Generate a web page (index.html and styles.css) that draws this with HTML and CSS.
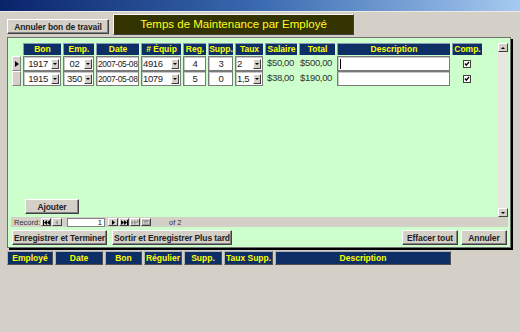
FILE: index.html
```html
<!doctype html>
<html lang="fr">
    <head>
        <meta charset="utf-8">
        <title>Temps de Maintenance par Employé</title>
        <link rel="stylesheet" href="styles.css">
    </head>
    <body>
        <div class="titlebar"></div>

        <div class="top">
            <button class="btn btn-cancel-work">Annuler bon de travail</button>
            <div class="title">Temps de Maintenance par Employé</div>
        </div>

        <div class="frame">
            <div class="sub">
                <div class="sub-body">
                    <div class="grid">
                        <div class="row head">
                            <div class="blank"></div>
                            <div class="hdr">Bon</div>
                            <div class="hdr">Emp.</div>
                            <div class="hdr">Date</div>
                            <div class="hdr"># Équip</div>
                            <div class="hdr">Reg.</div>
                            <div class="hdr">Supp.</div>
                            <div class="hdr">Taux</div>
                            <div class="hdr">Salaire</div>
                            <div class="hdr">Total</div>
                            <div class="hdr">Description</div>
                            <div class="hdr">Comp.</div>
                        </div>

                        <div class="row data">
                            <div class="selector current"><span class="arrow"></span></div>
                            <div class="box combo"><span class="val center">1917</span><span class="drop"></span></div>
                            <div class="box combo"><span class="val center">02</span><span class="drop"></span></div>
                            <div class="box date"><span class="val">2007-05-08</span></div>
                            <div class="box combo"><span class="val">4916</span><span class="drop"></span></div>
                            <div class="box"><span class="val center">4</span></div>
                            <div class="box"><span class="val center">3</span></div>
                            <div class="box combo"><span class="val">2</span><span class="drop"></span></div>
                            <div class="money">$50,00</div>
                            <div class="money">$500,00</div>
                            <div class="box desc"><span class="caret"></span></div>
                            <div class="check"><svg width="8" height="8" viewBox="0 0 8 8"><rect x="0.5" y="0.5" width="7" height="7" fill="#fff" stroke="#404040"/><path d="M2 3.5 L3.3 5.2 L6 2" fill="none" stroke="#000" stroke-width="1.3"/></svg></div>
                        </div>

                        <div class="row data">
                            <div class="selector"></div>
                            <div class="box combo"><span class="val center">1915</span><span class="drop"></span></div>
                            <div class="box combo"><span class="val center">350</span><span class="drop"></span></div>
                            <div class="box date"><span class="val">2007-05-08</span></div>
                            <div class="box combo"><span class="val">1079</span><span class="drop"></span></div>
                            <div class="box"><span class="val center">5</span></div>
                            <div class="box"><span class="val center">0</span></div>
                            <div class="box combo"><span class="val">1,5</span><span class="drop"></span></div>
                            <div class="money">$38,00</div>
                            <div class="money">$190,00</div>
                            <div class="box desc"></div>
                            <div class="check"><svg width="8" height="8" viewBox="0 0 8 8"><rect x="0.5" y="0.5" width="7" height="7" fill="#fff" stroke="#404040"/><path d="M2 3.5 L3.3 5.2 L6 2" fill="none" stroke="#000" stroke-width="1.3"/></svg></div>
                        </div>

                        <button class="btn btn-add">Ajouter</button>
                    </div>

                    <div class="vscroll">
                        <div class="sbtn"><span class="up"></span></div>
                        <div class="track"></div>
                        <div class="sbtn"><span class="down"></span></div>
                    </div>
                </div>

                <div class="nav">
                    <span class="nav-label">Record:</span>
                    <span class="nbtn"><svg width="7" height="5" viewBox="0 0 7 5"><rect x="0" y="0" width="1" height="5"/><path d="M1 2.5 L4 0 V5 Z M4 2.5 L7 0 V5 Z"/></svg></span>
                    <span class="nbtn dim"><svg width="4" height="5" viewBox="0 0 4 5"><path d="M0 2.5 L3 0 V5 Z"/></svg></span>
                    <span class="recno">1</span>
                    <span class="nbtn"><svg width="4" height="5" viewBox="0 0 4 5"><path d="M1 0 L4 2.5 L1 5 Z"/></svg></span>
                    <span class="nbtn"><svg width="7" height="5" viewBox="0 0 7 5"><path d="M0 0 L3 2.5 L0 5 Z M3 0 L6 2.5 L3 5 Z"/><rect x="6" y="0" width="1" height="5"/></svg></span>
                    <span class="nbtn dim"><svg width="8" height="5" viewBox="0 0 8 5"><path d="M0 0 L3 2.5 L0 5 Z M3 0 L6 2.5 L3 5 Z"/><path d="M6.5 0 V3 M5.5 1.5 H7.5" stroke="#9a9a9a" stroke-width="1"/></svg></span>
                    <span class="nbtn dim"><svg width="8" height="5" viewBox="0 0 8 5"><rect x="0.5" y="0.5" width="7" height="4" fill="none" stroke="#9a9a9a"/><path d="M2 1.5 H6 M2 3 H6" stroke="#9a9a9a"/></svg></span>
                    <span class="nav-of">of 2</span>
                </div>
            </div>

            <div class="actions">
                <button class="btn btn-save">Enregistrer et Terminer</button>
                <button class="btn btn-later">Sortir et Enregistrer Plus tard</button>
                <button class="btn btn-clear">Effacer tout</button>
                <button class="btn btn-annul">Annuler</button>
            </div>
        </div>

        <div class="legend">
            <div class="lg w-emp">Employé</div>
            <div class="lg w-date">Date</div>
            <div class="lg w-bon">Bon</div>
            <div class="lg w-reg">Régulier</div>
            <div class="lg w-supp">Supp.</div>
            <div class="lg w-taux">Taux Supp.</div>
            <div class="lg w-desc">Description</div>
        </div>
    </body>
</html>
```

FILE: styles.css
```css
body {
    margin: 0;
    width: 520px;
    height: 332px;
    overflow: hidden;
    background: #d4d0c8;
    font-family: "Liberation Sans", Arial, sans-serif;
    color: #111;
}

.titlebar {
    height: 11px;
    background: linear-gradient(to right, #0a246a, #3a6ab0 50%, #a6caf0);
    border-bottom: 1px solid #ecebe6;
}

/* buttons, windows classic look */
.btn {
    box-sizing: border-box;
    height: 15px;
    padding: 0;
    background: #d4d0c8;
    border: 1px solid;
    border-color: #ffffff #404040 #404040 #ffffff;
    box-shadow: inset -1px -1px 0 #808080;
    font-family: "Liberation Sans", Arial, sans-serif;
    font-weight: bold;
    font-size: 8.5px;
    letter-spacing: -0.1px;
    color: #222;
    text-align: center;
}

.top {
    display: flex;
    align-items: flex-start;
    padding: 2px 0 0 7px;
}
.btn-cancel-work {
    width: 102px;
    margin-top: 5px;
}
.title {
    box-sizing: border-box;
    width: 241px;
    height: 21px;
    margin-left: 4px;
    background: #333300;
    border: 1px solid;
    border-color: #f4f4f0 #404040 #404040 #f4f4f0;
    color: #ffff1a;
    font-size: 11.5px;
    line-height: 18px;
    text-align: center;
}

.frame {
    box-sizing: border-box;
    width: 504px;
    margin: 2px 0 0 7px;
    padding: 3px 2px 2px 3px;
    background: #ccffcc;
    border: 1px solid #707070;
    box-shadow: 2px 2px 0 #000;
}

.sub-body {
    display: flex;
    height: 176px;
}
.grid {
    flex: 1;
    display: flex;
    flex-direction: column;
    padding: 2px 0 3px 1px;
}
.row {
    display: grid;
    grid-template-columns: 9px 38px 31px 43px 40px 23px 25px 28px 32px 36px 113px 30px;
    column-gap: 2px;
}
.head {
    height: 12px;
}
.data {
    height: 14px;
    margin-top: 1px;
}

.hdr {
    background: #0d2f66;
    border-top: 1px solid #8a9ab8;
    border-left: 1px solid #8a9ab8;
    color: #ffff00;
    font-weight: bold;
    font-size: 8.5px;
    line-height: 11px;
    text-align: center;
    white-space: nowrap;
}

.selector {
    box-sizing: border-box;
    background: #d4d0c8;
    border: 1px solid;
    border-color: #ffffff #808080 #808080 #ffffff;
    display: flex;
    align-items: center;
    justify-content: center;
    height: 15px;
}
.arrow {
    width: 0;
    height: 0;
    border-top: 3px solid transparent;
    border-bottom: 3px solid transparent;
    border-left: 4px solid #000;
}

.box {
    box-sizing: border-box;
    display: flex;
    align-items: center;
    background: #fff;
    border: 1px solid #7a7a7a;
    box-shadow: inset 1px 1px 0 #c8c8c8;
    font-size: 9.5px;
    letter-spacing: -0.35px;
    color: #222;
    white-space: nowrap;
    overflow: hidden;
}
.box.date {
    font-size: 8.5px;
    letter-spacing: -0.4px;
}
.val {
    flex: 1;
    padding-left: 1px;
}
.val.center {
    text-align: center;
}
.drop {
    box-sizing: border-box;
    width: 8px;
    height: 10px;
    margin-right: 1px;
    background: #d4d0c8;
    border: 1px solid;
    border-color: #ffffff #404040 #404040 #ffffff;
    display: flex;
    align-items: center;
    justify-content: center;
}
.drop::after {
    content: "";
    border-left: 2px solid transparent;
    border-right: 2px solid transparent;
    border-top: 2px solid #000;
}
.desc {
    padding-left: 2px;
}
.caret {
    width: 1px;
    height: 10px;
    background: #000;
}

.money {
    font-size: 9.5px;
    letter-spacing: -0.35px;
    color: #333;
    text-align: right;
    line-height: 14px;
    padding-right: 3px;
}
.check {
    display: flex;
    align-items: center;
    justify-content: center;
}

.btn-add {
    width: 54px;
    margin: auto 0 0 13px;
}

.vscroll {
    width: 10px;
    margin-top: 2px;
    display: flex;
    flex-direction: column;
    background: #e8e6e1;
}
.sbtn {
    box-sizing: border-box;
    height: 9px;
    background: #d4d0c8;
    border: 1px solid;
    border-color: #ffffff #404040 #404040 #ffffff;
    display: flex;
    align-items: center;
    justify-content: center;
}
.track {
    flex: 1;
}
.up {
    border-left: 2px solid transparent;
    border-right: 2px solid transparent;
    border-bottom: 2px solid #000;
}
.down {
    border-left: 2px solid transparent;
    border-right: 2px solid transparent;
    border-top: 2px solid #000;
}

.nav {
    height: 10px;
    display: flex;
    align-items: center;
    background: #d4d0c8;
    font-size: 7.5px;
    color: #333;
    padding-left: 3px;
}
.nav-label {
    width: 27px;
}
.nbtn {
    box-sizing: border-box;
    width: 10px;
    height: 8px;
    margin-right: 1px;
    background: #d4d0c8;
    border: 1px solid;
    border-color: #ffffff #404040 #404040 #ffffff;
    display: flex;
    align-items: center;
    justify-content: center;
}
.nbtn.dim svg {
    fill: #9a9a9a;
}
.recno {
    box-sizing: border-box;
    width: 38px;
    height: 9px;
    margin: 0 3px 0 4px;
    background: #fff;
    border: 1px solid #808080;
    text-align: right;
    padding-right: 2px;
    line-height: 7px;
    color: #111;
}
.nav-of {
    margin-left: 17px;
}

.actions {
    display: flex;
    margin-top: 3px;
    padding-left: 1px;
}
.btn-save {
    width: 95px;
}
.btn-later {
    width: 120px;
    margin-left: 5px;
}
.btn-clear {
    width: 56px;
    margin-left: auto;
}
.btn-annul {
    width: 46px;
    margin-left: 3px;
    margin-right: 1px;
}

.legend {
    display: flex;
    gap: 2px;
    margin: 3px 0 0 7px;
}
.lg {
    box-sizing: border-box;
    height: 14px;
    background: #0d2f66;
    border: 1px solid;
    border-color: #b0b0b0 #505050 #505050 #b0b0b0;
    color: #ffff00;
    font-weight: bold;
    font-size: 8.5px;
    line-height: 12px;
    text-align: center;
    white-space: nowrap;
}
.w-emp { width: 46px; }
.w-date { width: 48px; }
.w-bon { width: 37px; }
.w-reg { width: 38px; }
.w-supp { width: 38px; }
.w-taux { width: 49px; }
.w-desc { width: 176px; }
```
